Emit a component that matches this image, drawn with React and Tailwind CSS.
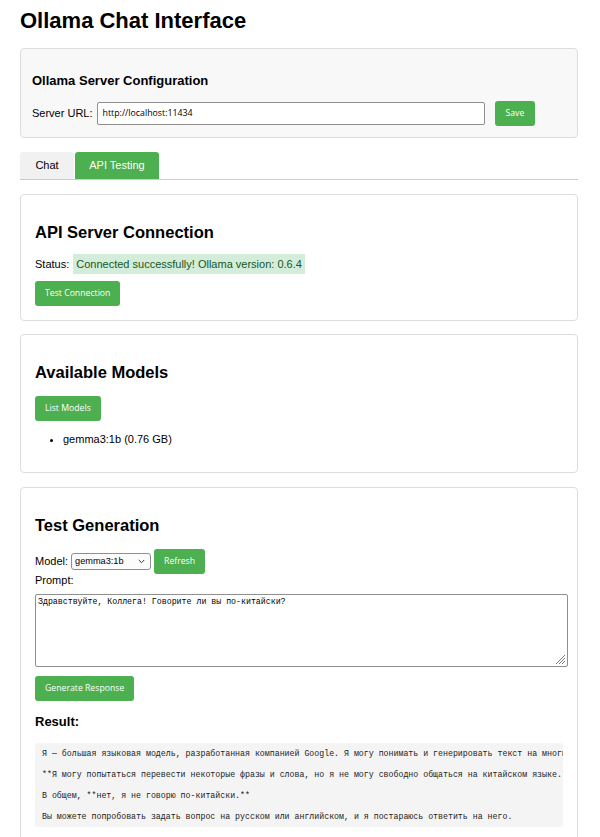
import React from 'react';

const btn =
  "inline-block bg-[#4CAF50] text-white rounded-[3px] h-[25px] px-[10px] text-[8.7px] leading-[25px] [font-family:'Open_Sans',sans-serif]";

const Card = ({ children, className = '' }) => (
  <div className={'border border-[#dddddd] rounded-[4px] px-[14px] pt-[14px] pb-[14px] ' + className}>
    {children}
  </div>
);

const CardTitle = ({ children }) => (
  <h2 className="text-[16.5px] font-bold leading-[19px] mt-[14px] mb-[14px] text-black">{children}</h2>
);

const lines = [
  'Я — большая языковая модель, разработанная компанией Google. Я могу понимать и генерировать текст на многих языках, включая русский и английский.',
  '**Я могу попытаться перевести некоторые фразы и слова, но я не могу свободно общаться на китайском языке.**',
  'В общем, **нет, я не говорю по-китайски.**',
  'Вы можете попробовать задать вопрос на русском или английском, и я постараюсь ответить на него.',
];

export default function App() {
  return (
    <div className="bg-white min-h-[837px] pl-[20px] pr-[22px] text-[11px] text-black [font-family:'Liberation_Sans',Arial,sans-serif]">
      <h1 className="text-[22px] font-bold leading-[25px] pt-[8px] mb-[15px]">Ollama Chat Interface</h1>

      {/* server config */}
      <div className="bg-[#f8f8f8] border border-[#dddddd] rounded-[4px] px-[11px] pt-[24px] pb-[11px] mb-[14px]">
        <h3 className="text-[13px] font-bold leading-[15px] mb-[13px]">Ollama Server Configuration</h3>
        <div className="flex items-center">
          <span className="mr-[4px]">Server URL:</span>
          <div className="w-[388px] h-[23px] border border-[#8f8f8f] rounded-[2px] bg-white px-[5px] flex items-center text-[8.8px] [font-family:'Open_Sans',sans-serif]">
            http://localhost:11434
          </div>
          <button className={btn + ' ml-[10px] px-[11px]'}>Save</button>
        </div>
      </div>

      {/* tabs */}
      <div className="flex border-b border-[#cccccc] mb-[14px]">
        <div className="bg-[#f1f1f1] h-[27px] w-[54px] flex items-center justify-center rounded-t-[3px]">Chat</div>
        <div className="bg-[#4CAF50] text-white h-[27px] w-[84px] ml-[1px] flex items-center justify-center rounded-t-[3px]">API Testing</div>
      </div>

      <Card className="mb-[13px]">
        <CardTitle>API Server Connection</CardTitle>
        <div className="flex items-center h-[20px] mt-[-2px]">
          <span>Status:</span>
          <span className="ml-[4px] bg-[#d4edda] text-[#155724] h-[20px] px-[3px] flex items-center">
            Connected successfully! Ollama version: 0.6.4
          </span>
        </div>
        <div className="mt-[7px]">
          <button className={btn}>Test Connection</button>
        </div>
      </Card>

      <Card className="mb-[14px]">
        <CardTitle>Available Models</CardTitle>
        <button className={btn}>List Models</button>
        <ul className="list-disc pl-[28px] my-[12px] leading-[13px]">
          <li>gemma3:1b (0.76 GB)</li>
        </ul>
      </Card>

      <Card>
        <CardTitle>Test Generation</CardTitle>
        <div className="flex items-center h-[25px] mt-[1px]">
          <span className="mr-[3px]">Model:</span>
          <div className="w-[80px] h-[17px] border border-[#8f8f8f] rounded-[3px] bg-[#fbfbfb] flex items-center justify-between pl-[3px] pr-[5px] text-[9.2px]">
            <span>gemma3:1b</span>
            <svg width="7" height="5" viewBox="0 0 7 5" fill="none">
              <path d="M0.8 1 L3.5 3.7 L6.2 1" stroke="#333" strokeWidth="1" />
            </svg>
          </div>
          <button className={btn + ' ml-[3px]'}>Refresh</button>
        </div>
        <div className="leading-[12px]">Prompt:</div>
        <div className="relative mt-[8px] w-[533px] h-[73px] border border-[#8f8f8f] rounded-[2px] bg-white px-[2px] pt-[2px] text-[8.25px] leading-[10px] [font-family:'Liberation_Mono',monospace]">
          Здравствуйте, Коллега! Говорите ли вы по-китайски?
          <svg className="absolute right-[1px] bottom-[1px]" width="12" height="12" viewBox="0 0 12 12">
            <path d="M11 2 L2 11 M11 5 L5 11 M11 8 L8 11" stroke="#777" strokeWidth="1" />
          </svg>
        </div>
        <div className="mt-[9px]">
          <button className={btn + ' h-[24px] leading-[24px]'}>Generate Response</button>
        </div>
        <h3 className="text-[13px] font-bold leading-[15px] mt-[13px] mb-[14px]">Result:</h3>
        <div className="bg-[#f4f4f4] rounded-[3px] px-[7px] overflow-hidden whitespace-pre text-[8.25px] leading-[21px] text-[#222] [font-family:'Liberation_Mono',monospace]">
          {lines.map((l, i) => (
            <div key={i}>{l}</div>
          ))}
        </div>
      </Card>
    </div>
  );
}
